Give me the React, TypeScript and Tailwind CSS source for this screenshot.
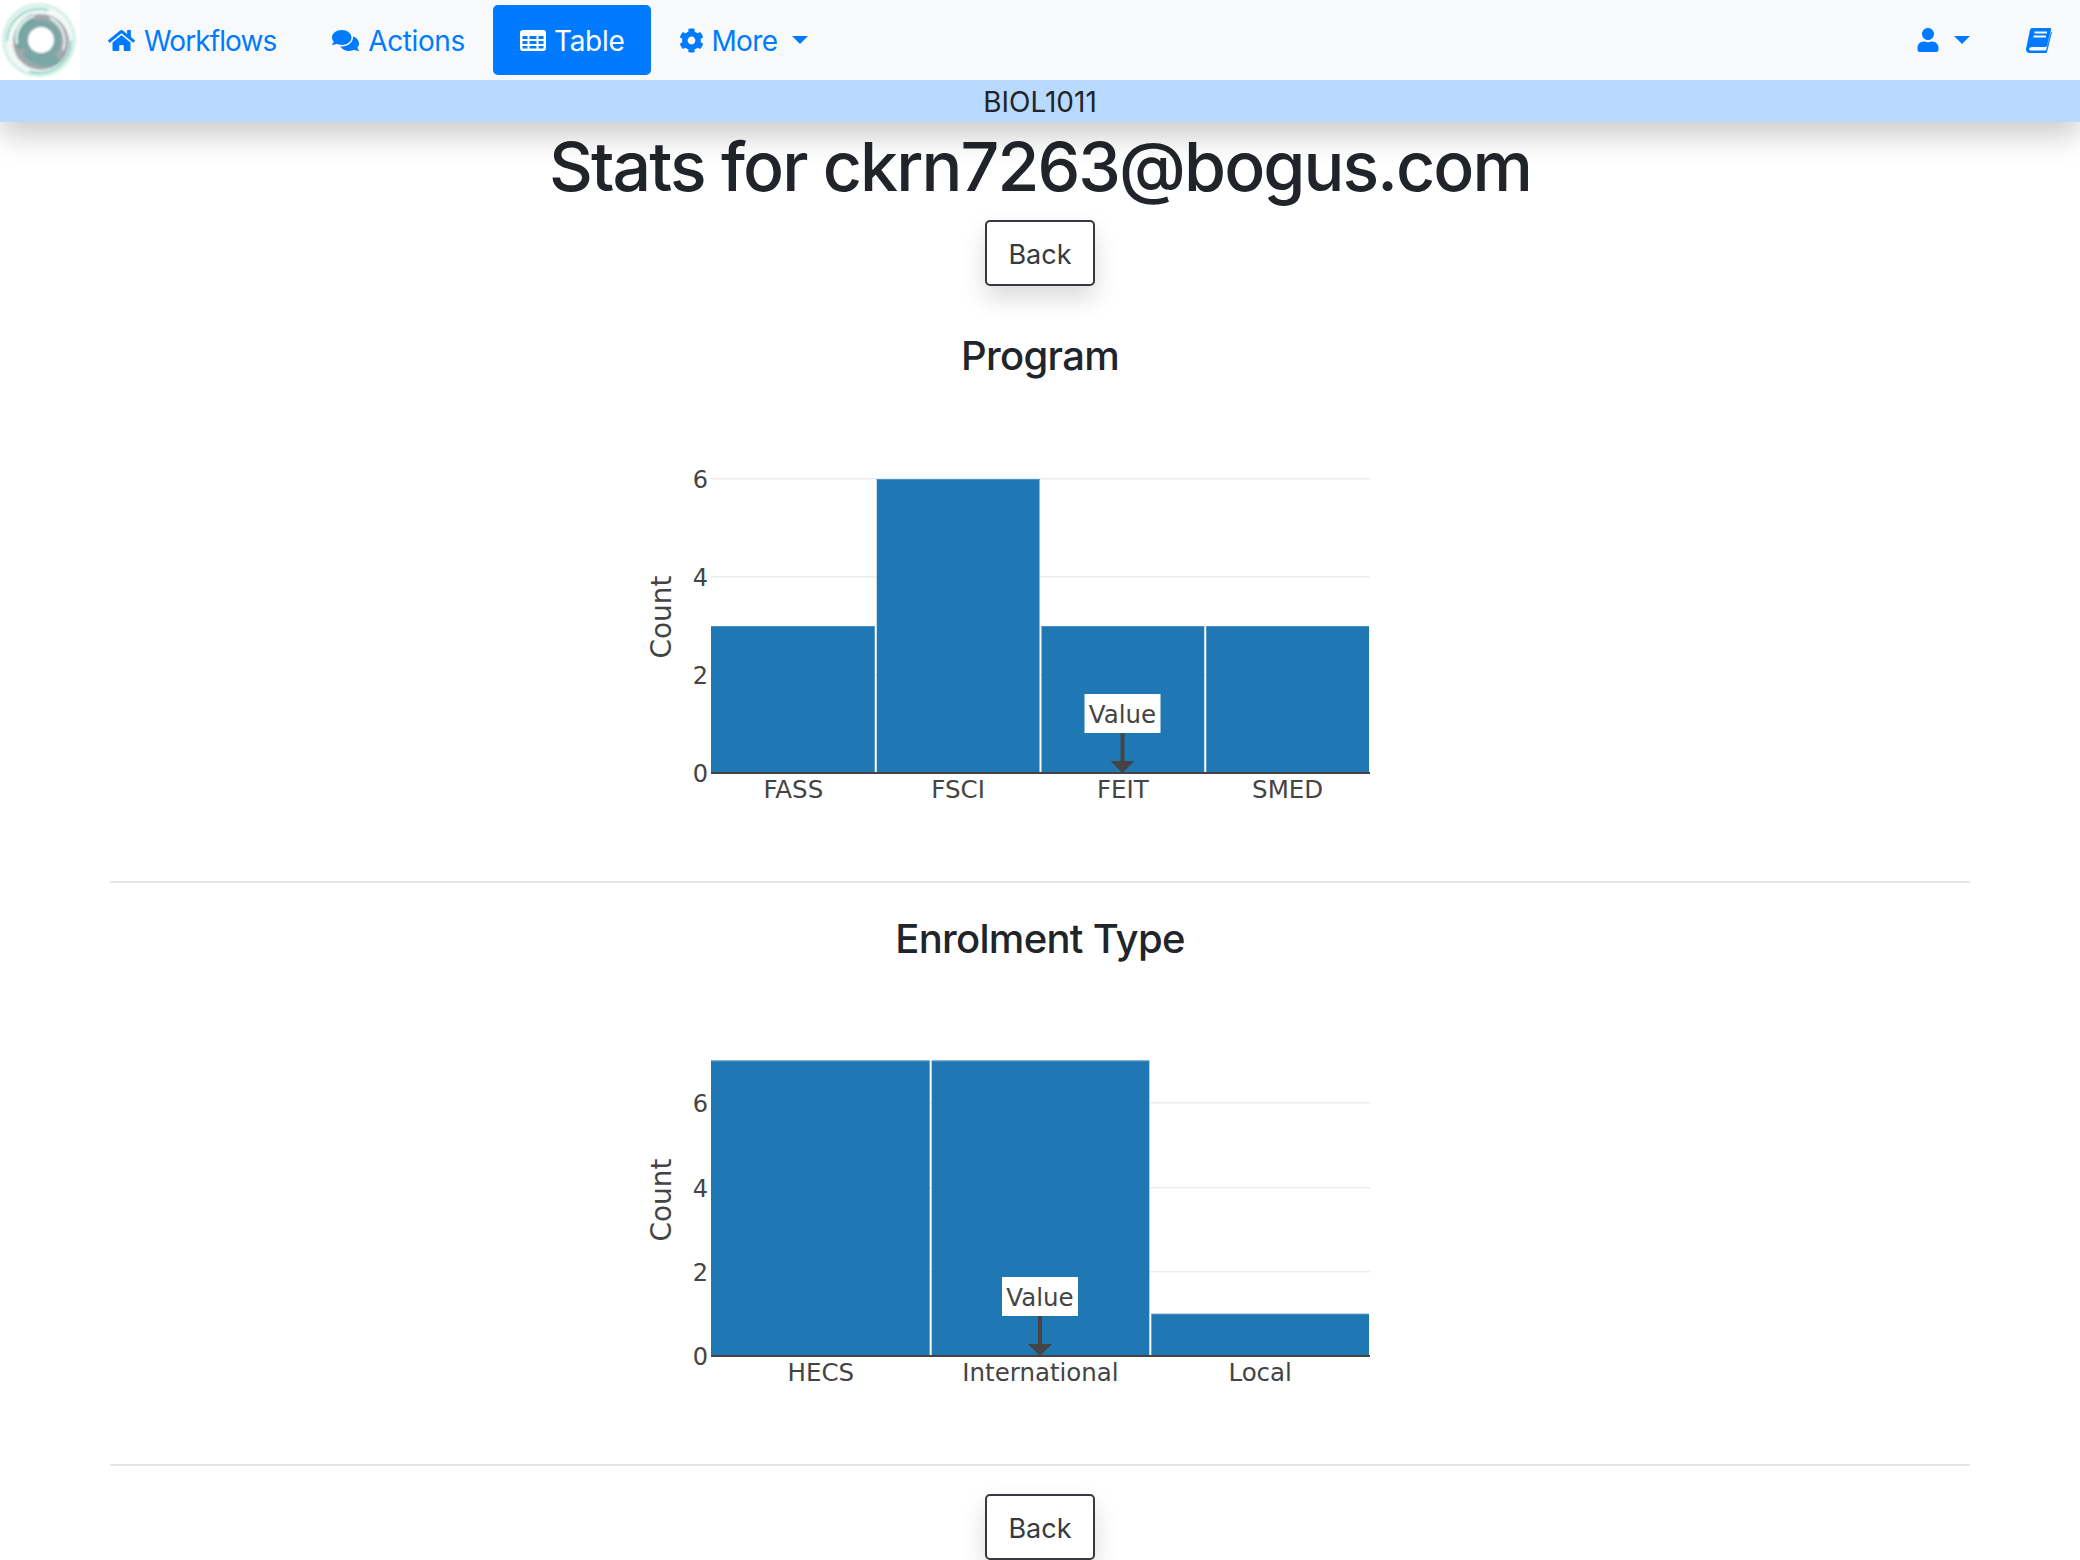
import { FaCog, FaComments, FaHome, FaUser } from "react-icons/fa";
import type { IconType } from "react-icons";

type Bar = { label: string; value: number };

type ChartProps = {
  bars: Bar[];
  ticks: { label: string; y: number }[];
  barTop: (value: number) => number;
  pointer: number;
};

const PLOT_LEFT = 71;
const PLOT_RIGHT = 730;
const AXIS_Y = 363;
const chartFont = { fontFamily: '"DejaVu Sans", sans-serif' };

function TableIcon() {
  return (
    <svg width="26" height="21" viewBox="0 0 26 21" className="shrink-0">
      <path
        fill="currentColor"
        fillRule="evenodd"
        d="M3 0H23A3 3 0 0 1 26 3V18A3 3 0 0 1 23 21H3A3 3 0 0 1 0 18V3A3 3 0 0 1 3 0ZM2.5 6V9H7.5V6ZM9.5 6V9H16.5V6ZM18.5 6V9H23.5V6ZM2.5 11V14H7.5V11ZM9.5 11V14H16.5V11ZM18.5 11V14H23.5V11ZM2.5 16V18.5H7.5V16ZM9.5 16V18.5H16.5V16ZM18.5 16V18.5H23.5V16Z"
      />
    </svg>
  );
}

function BookIcon() {
  return (
    <svg width="26" height="25" viewBox="0 0 26 25">
      <path
        fill="currentColor"
        d="M6 0H24Q25.5 0 25 2L21 18Q20.5 19 19 19H6Q3.5 19 3 21Q3 22.5 5 22.5H20L25 4H26L21 24Q20.8 25 20 25H4Q0 25 0 21Q0 20 .5 18.5L4 2Q4.5 0 6 0Z"
      />
      <path stroke="#f8f9fa" strokeWidth="2" d="M8.5 4.5H21M7.5 8.5H20" />
    </svg>
  );
}

function NavItem({
  icon: Icon,
  label,
  tight,
}: {
  icon: IconType;
  label: string;
  tight?: boolean;
}) {
  return (
    <a className="flex h-[70px] items-center gap-[9px] px-[28px] text-[#007bff]">
      <Icon className="text-[27px]" />
      <span className={tight ? "pt-[2px] tracking-[-0.9px]" : "pt-[2px] tracking-[-0.4px]"}>{label}</span>
    </a>
  );
}

function Caret({ className }: { className: string }) {
  return <span className={`h-0 w-0 border-x-[8px] border-t-[8px] border-x-transparent border-t-[#007bff] ${className}`} />;
}

function Logo() {
  return (
    <div className="h-20 w-20 shrink-0 bg-white">
      <svg width="80" height="80" viewBox="0 0 80 80">
        <defs>
          <filter id="logo-blur">
            <feGaussianBlur stdDeviation="1.2" />
          </filter>
        </defs>
        <g filter="url(#logo-blur)">
          <circle cx="39" cy="40" r="37" fill="#d4f0e9" />
          <circle cx="39" cy="40" r="34" fill="#f2f8f6" />
          <circle cx="39" cy="41" r="32" fill="none" stroke="#83d4c2" strokeWidth="2" strokeDasharray="60 40" />
          <circle cx="41" cy="42" r="28" fill="#a3a8ae" />
          <path d="M22 48 A22 22 0 0 1 34 18" fill="none" stroke="#6fa5a0" strokeWidth="9" />
          <path d="M17 44 A24 24 0 0 1 34 16" fill="none" stroke="#e4f5f1" strokeWidth="2.5" />
          <path d="M26 52 A22 22 0 0 0 58 58" fill="none" stroke="#76a8a5" strokeWidth="8" />
          <path d="M50 18 A26 26 0 0 1 63 50" fill="none" stroke="#e8f6f3" strokeWidth="2" />
          <circle cx="41" cy="40" r="20" fill="#7ba6a5" />
          <circle cx="41" cy="40" r="13" fill="#ffffff" />
        </g>
      </svg>
    </div>
  );
}

function BarChart({ bars, ticks, barTop, pointer }: ChartProps) {
  const barWidth = (PLOT_RIGHT - PLOT_LEFT) / bars.length;
  const boxLeft = pointer - 38;
  const boxTop = AXIS_Y - 79;

  return (
    <svg width="800" height="460" viewBox="0 0 800 460" className="mx-auto block" style={chartFont}>
      {ticks
        .filter((tick) => tick.label !== "0")
        .map((tick) => (
          <rect key={tick.label} x={PLOT_LEFT} y={tick.y - 1} width={PLOT_RIGHT - PLOT_LEFT} height="1.5" fill="#eeeeee" />
        ))}
      {bars.map((bar, i) => {
        const x = PLOT_LEFT + i * barWidth + (i === 0 ? 0 : 1);
        const width = barWidth - (i === 0 ? 1 : 2);
        return (
          <g key={bar.label}>
            <rect x={x} y={barTop(bar.value)} width={width} height={AXIS_Y - barTop(bar.value)} fill="#1f77b4" />
            <rect x={x} y={barTop(bar.value)} width={width} height="1" fill="#4b91c3" />
          </g>
        );
      })}
      <rect x={PLOT_LEFT} y={AXIS_Y - 1} width={PLOT_RIGHT - PLOT_LEFT} height="2" fill="#444444" />
      {ticks.map((tick) => (
        <text key={tick.label} x="68" y={tick.y + 9} textAnchor="end" fontSize="24" fill="#444444">
          {tick.label}
        </text>
      ))}
      {bars.map((bar, i) => (
        <text
          key={bar.label}
          x={PLOT_LEFT + (i + 0.5) * barWidth}
          y="388"
          textAnchor="middle"
          fontSize="24.5"
          fill="#444444"
        >
          {bar.label}
        </text>
      ))}
      <text transform="translate(31 207) rotate(-90)" textAnchor="middle" fontSize="28" fill="#444444">
        Count
      </text>
      <rect x={boxLeft} y={boxTop} width="76" height="39" fill="#ffffff" />
      <text x={pointer} y={boxTop + 29} textAnchor="middle" fontSize="24.5" fill="#444444">
        Value
      </text>
      <rect x={pointer - 2} y={boxTop + 39} width="4" height="30" fill="#444444" />
      <path d={`M${pointer - 12} ${AXIS_Y - 12} H${pointer + 12} L${pointer} ${AXIS_Y} Z`} fill="#444444" />
    </svg>
  );
}

function BackButton({ className }: { className: string }) {
  return (
    <button
      className={`mx-auto block h-[66px] w-[110px] rounded-[5px] border-2 border-[#343a40] bg-white pt-[5px] text-[27px] text-[#343a40] shadow-[0_12px_24px_rgba(0,0,0,0.15)] ${className}`}
    >
      Back
    </button>
  );
}

function ChartSection({ title, chart }: { title: string; chart: ChartProps }) {
  return (
    <section className="pb-[26px]">
      <h3 className="h-[60px] text-center text-[40px] leading-[60px] font-medium tracking-[-0.7px] text-[#212529]">
        {title}
      </h3>
      <div className="mt-[24px]">
        <BarChart {...chart} />
      </div>
      <hr className="mx-[110px] mt-[11px] border-t-2 border-[#e5e6e7]" />
    </section>
  );
}

const programChart: ChartProps = {
  bars: [
    { label: "FASS", value: 3 },
    { label: "FSCI", value: 6 },
    { label: "FEIT", value: 3 },
    { label: "SMED", value: 3 },
  ],
  ticks: [
    { label: "6", y: 69 },
    { label: "4", y: 167 },
    { label: "2", y: 265 },
    { label: "0", y: 363 },
  ],
  barTop: (value) => 363 - value * 49,
  pointer: 482.5,
};

const enrolmentChart: ChartProps = {
  bars: [
    { label: "HECS", value: 7 },
    { label: "International", value: 7 },
    { label: "Local", value: 1 },
  ],
  ticks: [
    { label: "6", y: 110 },
    { label: "4", y: 195 },
    { label: "2", y: 279 },
    { label: "0", y: 363 },
  ],
  barTop: (value) => 363 - value * 42.2,
  pointer: 400,
};

export default function App() {
  return (
    <main className="h-[1560px] overflow-hidden bg-white font-['Inter',sans-serif] text-[#212529]">
      <header className="relative z-10 shadow-[0_14px_28px_rgba(0,0,0,0.2)]">
        <nav className="flex h-20 items-center bg-[#f8f9fa] text-[28px] tracking-[-0.3px]">
          <Logo />
          <NavItem icon={FaHome} label="Workflows" tight />
          <NavItem icon={FaComments} label="Actions" />
          <a className="flex h-[70px] items-center gap-2 rounded-[5px] bg-[#007bff] px-[27px] text-white">
            <TableIcon />
            <span className="pt-[2px]">Table</span>
          </a>
          <a className="flex items-center gap-[7px] px-[28px] text-[#007bff]">
            <FaCog className="text-[25px]" />
            <span className="pt-[2px] tracking-[-0.6px]">More</span>
            <Caret className="ml-[7px]" />
          </a>
          <div className="ml-auto flex items-center text-[#007bff]">
            <a className="flex items-center px-[28px]">
              <FaUser className="text-[24px]" />
              <Caret className="ml-[14px]" />
            </a>
            <a className="flex items-center px-[28px]">
              <BookIcon />
            </a>
          </div>
        </nav>
        <div className="flex h-[42px] items-center justify-center bg-[#b8daff] pt-[2px] text-[28px]">BIOL1011</div>
      </header>

      <h1 className="mt-[6px] text-center text-[68px] leading-[77px] font-medium tracking-[-1.9px]">
        Stats for ckrn7263@bogus.com
      </h1>
      <BackButton className="mt-[15px]" />
      <div className="mt-[40px]">
        <ChartSection title="Program" chart={programChart} />
        <ChartSection title="Enrolment Type" chart={enrolmentChart} />
      </div>
      <BackButton className="mt-[2px]" />
    </main>
  );
}
